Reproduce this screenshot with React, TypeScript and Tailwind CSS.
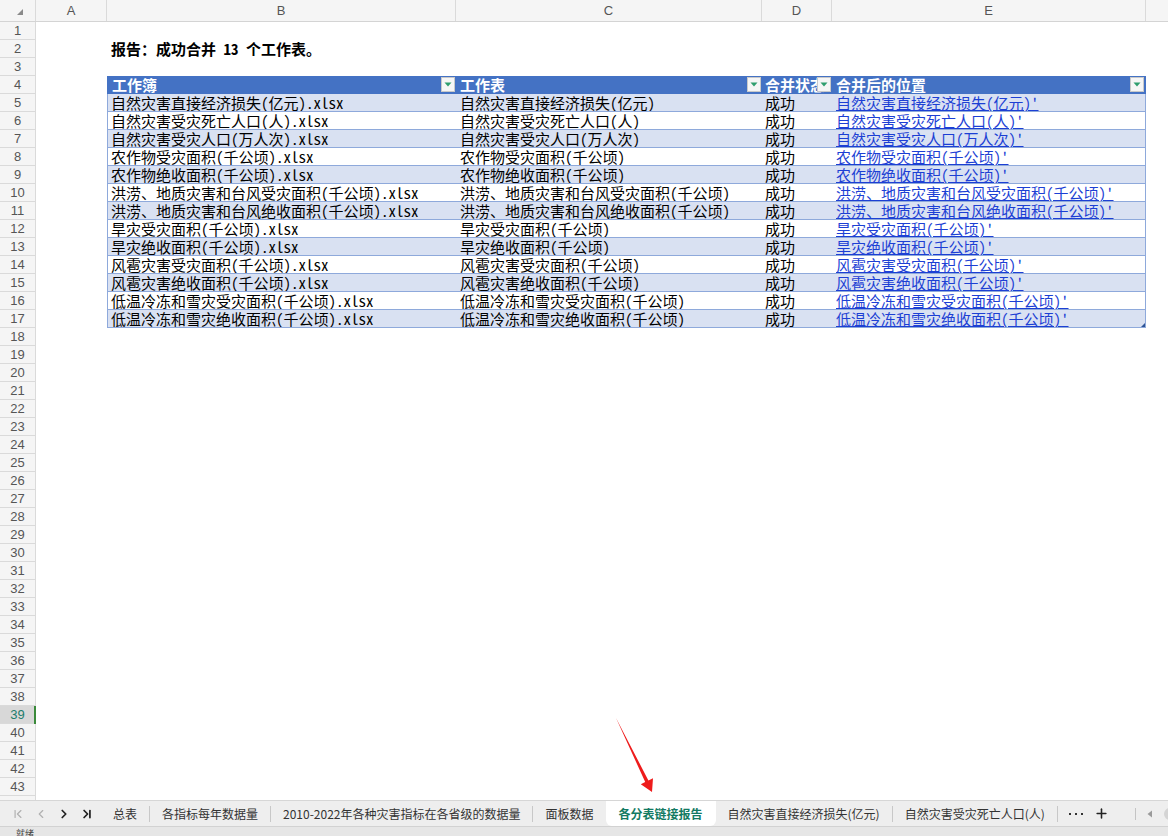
import { ChevronFirst, ChevronLeft, ChevronRight, ChevronLast, Plus } from 'lucide-react'

const cellFont = { fontFamily: '"Noto Sans Mono CJK SC", "Noto Sans CJK SC", monospace' }

const items = [
  '自然灾害直接经济损失(亿元)',
  '自然灾害受灾死亡人口(人)',
  '自然灾害受灾人口(万人次)',
  '农作物受灾面积(千公顷)',
  '农作物绝收面积(千公顷)',
  '洪涝、地质灾害和台风受灾面积(千公顷)',
  '洪涝、地质灾害和台风绝收面积(千公顷)',
  '旱灾受灾面积(千公顷)',
  '旱灾绝收面积(千公顷)',
  '风雹灾害受灾面积(千公顷)',
  '风雹灾害绝收面积(千公顷)',
  '低温冷冻和雪灾受灾面积(千公顷)',
  '低温冷冻和雪灾绝收面积(千公顷)',
]

const tabs = ['总表', '各指标每年数据量', '2010-2022年各种灾害指标在各省级的数据量', '面板数据', '各分表链接报告', '自然灾害直接经济损失(亿元)', '自然灾害受灾死亡人口(人)']

function FilterButton() {
  return (
    <div className="absolute right-[1px] top-[1px] w-[14px] h-[15px] bg-[#f6f6f6] border border-[#c9c9c9] flex items-center justify-center">
      <svg width="8" height="5" viewBox="0 0 8 5">
        <path d="M0.5 0.5 L7.5 0.5 L4 4.5 Z" fill="#2f9e6e" />
      </svg>
    </div>
  )
}

function TableHeader() {
  const heads: [string, string][] = [
    ['工作簿', 'w-[349px] pl-[4px] border-l border-[#4472c4]'],
    ['工作表', 'w-[306px] pl-[4px]'],
    ['合并状态', 'w-[70px] pl-[3px]'],
    ['合并后的位置', 'w-[314px] pl-[4px] border-r border-[#4472c4]'],
  ]
  return (
    <div className="flex w-[1039px] bg-[#4472c4] h-[18px]">
      {heads.map(([t, c]) => (
        <div key={t} className={`relative h-full flex items-center overflow-hidden shrink-0 ${c}`}>
          <span className="whitespace-nowrap text-white font-bold text-[15px] leading-[18px]" style={cellFont}>{t}</span>
          <FilterButton />
        </div>
      ))}
    </div>
  )
}

function TableRow({ name, i, last }: { name: string; i: number; last: boolean }) {
  const bg = i % 2 === 0 ? 'bg-[#d9e1f2]' : 'bg-white'
  const cell = 'h-full flex items-center shrink-0 overflow-hidden'
  return (
    <div className={`relative flex w-[1039px] h-[18px] border-b border-[#8ea9db] ${bg} text-[15px] leading-[17px] text-black whitespace-nowrap`} style={cellFont}>
      <div className={`${cell} w-[349px] pl-[3px] border-l border-[#8ea9db]`}>{name}.xlsx</div>
      <div className={`${cell} w-[306px] pl-[4px]`}>{name}</div>
      <div className={`${cell} w-[70px] pl-[3px]`}>成功</div>
      <div className={`${cell} w-[314px] pl-[4px] border-r border-[#8ea9db]`}>
        <span className="text-[#1c3fd4] underline underline-offset-[1px]">{name}'</span>
      </div>
      {last && (
        <svg className="absolute right-[1px] bottom-[0px]" width="4" height="4" viewBox="0 0 4 4">
          <path d="M4 0 L4 4 L0 4 Z" fill="#2f5597" />
        </svg>
      )}
    </div>
  )
}

function SheetRow({ n }: { n: number }) {
  const sel = n === 39
  let content: React.ReactNode = null
  if (n === 2) {
    content = (
      <div className="h-full flex items-center pl-[4px] text-[15px] leading-[18px] font-bold text-black whitespace-nowrap" style={cellFont}>
        报告：成功合并 13 个工作表。
      </div>
    )
  } else if (n === 4) {
    content = <TableHeader />
  } else if (n >= 5 && n <= 17) {
    content = <TableRow name={items[n - 5]} i={n - 5} last={n === 17} />
  }
  return (
    <div className="flex h-[18px] shrink-0">
      <div
        className={`relative w-[36px] shrink-0 border-r border-b border-[#dadada] flex items-center justify-center text-[13px] ${
          sel ? 'bg-[#d8d8d8] text-[#1d7d6c]' : 'bg-[#f5f5f5] text-[#555]'
        }`}
        style={{ fontFamily: '"Liberation Sans", Arial, sans-serif' }}
      >
        {n}
        {sel && <div className="absolute right-[-1px] top-0 bottom-[-1px] w-[2px] bg-[#3a8a3a]" />}
      </div>
      <div className="w-[71px] shrink-0" />
      <div className="flex-1 h-full">{content}</div>
    </div>
  )
}

export default function App() {
  const rows = Array.from({ length: 44 }, (_, i) => i + 1)
  const colHeads: [string, string][] = [
    ['A', 'w-[71px]'],
    ['B', 'w-[349px]'],
    ['C', 'w-[306px]'],
    ['D', 'w-[70px]'],
    ['E', 'w-[314px]'],
  ]
  return (
    <div className="relative w-[1168px] h-[836px] flex flex-col overflow-hidden bg-white">
      {/* column headers */}
      <div className="flex h-[22px] shrink-0 bg-[#f5f5f5] border-b border-[#d4d4d4] text-[13px] text-[#555]" style={{ fontFamily: '"Liberation Sans", Arial, sans-serif' }}>
        <div className="w-[36px] shrink-0 border-r border-[#dadada] flex items-center justify-center">
          <svg width="8" height="8" viewBox="0 0 8 8" className="ml-[5px] mt-[3px]">
            <path d="M7 1 L7 7 L1 7 Z" fill="#8a8a8a" />
          </svg>
        </div>
        {colHeads.map(([l, w]) => (
          <div key={l} className={`${w} shrink-0 border-r border-[#dadada] flex items-center justify-center`}>
            {l}
          </div>
        ))}
        <div className="flex-1" />
      </div>

      {/* cells */}
      <div className="flex-1 overflow-hidden flex flex-col">
        {rows.map((n) => (
          <SheetRow key={n} n={n} />
        ))}
      </div>

      {/* sheet tabs */}
      <div
        className="h-[26px] shrink-0 flex items-stretch bg-[#eeeeee] border-t border-[#d6d6d6] text-[12px] text-[#333] whitespace-nowrap overflow-hidden"
        style={{ fontFamily: '"Noto Sans CJK SC", sans-serif' }}
      >
        <div className="w-[101px] shrink-0 flex items-center pl-[11px] gap-[9px]">
          <ChevronFirst size={14} strokeWidth={2} className="text-[#b0b0b0]" />
          <ChevronLeft size={14} strokeWidth={2} className="text-[#b0b0b0]" />
          <ChevronRight size={14} strokeWidth={3} className="text-[#222]" />
          <ChevronLast size={14} strokeWidth={3} className="text-[#222]" />
        </div>
        {tabs.map((t, i) => {
          const active = i === 4
          const prevActive = i === 5
          return (
            <div key={t} className="flex items-center shrink-0">
              {i > 0 && !active && !prevActive && <div className="w-px h-[16px] bg-[#c8c8c8]" />}
              <div
                className={
                  active
                    ? 'h-full flex items-center px-[13px] bg-white rounded-b-[6px] text-[#137a62] font-bold'
                    : 'h-full flex items-center px-[12px]'
                }
              >
                {t}
              </div>
            </div>
          )
        })}
        <div className="w-px h-[16px] bg-[#c8c8c8] self-center shrink-0" />
        <div className="flex items-center pl-[11px] gap-[11px] shrink-0">
          <div className="flex items-center gap-[4px]">
            <div className="w-[2px] h-[2px] bg-[#333]" />
            <div className="w-[2px] h-[2px] bg-[#333]" />
            <div className="w-[2px] h-[2px] bg-[#333]" />
          </div>
          <Plus size={15} strokeWidth={2.5} className="text-[#222]" />
        </div>
        <div className="flex-1" />
        <div className="flex items-center gap-[11px] mr-[-8px] shrink-0">
          <div className="w-px h-[12px] bg-[#c4c4c4]" />
          <svg width="6" height="8" viewBox="0 0 6 8">
            <path d="M5 0.5 L5 7.5 L0.5 4 Z" fill="#9a9a9a" />
          </svg>
          <div className="w-[12px] h-[12px] rounded-full bg-[#d4d4d4]" />
        </div>
      </div>

      {/* status bar */}
      <div className="h-[10px] shrink-0 bg-[#e6e6e6] border-t border-[#d2d2d2] overflow-hidden pl-[16px] text-[9px] leading-[14px] text-[#444]" style={{ fontFamily: '"Noto Sans CJK SC", sans-serif' }}>
        就绪
      </div>

      {/* red annotation arrow */}
      <svg className="absolute left-[600px] top-[710px] pointer-events-none" width="70" height="90" viewBox="0 0 70 90">
        <path d="M16 8 L48.4 70.4 L53 68.2 L52 82 L40.8 74.2 L45.2 72 Z" fill="#ee1c1c" />
      </svg>
    </div>
  )
}
